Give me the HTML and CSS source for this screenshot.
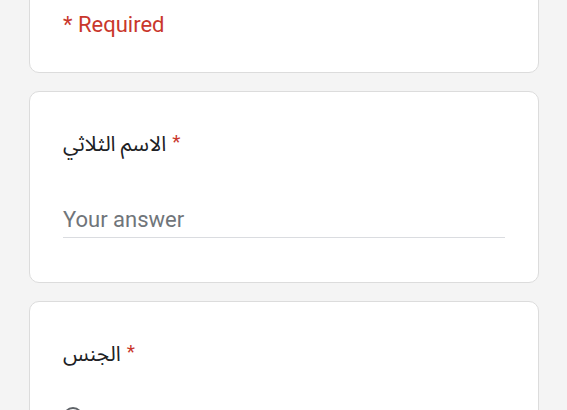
FILE: index.html
```html
<!DOCTYPE html>
<html lang="en">
<head>
<meta charset="utf-8">
<link rel="stylesheet" href="styles.css">
</head>
<body>
<main class="page">
  <section class="card card-head">
    <p class="required-note">* Required</p>
  </section>
  <section class="card">
    <div class="question-title"><span class="ar">الاسم الثلاثي</span><span class="star">*</span></div>
    <div class="answer">Your answer</div>
  </section>
  <section class="card">
    <div class="question-title"><span class="ar">الجنس</span><span class="star">*</span></div>
    <div class="options">
      <div class="option"><span class="radio"></span></div>
    </div>
  </section>
</main>
</body>
</html>
```
FILE: styles.css
```css
html, body {
  margin: 0;
  padding: 0;
  background: #f4f4f4;
  overflow: hidden;
}
body {
  font-family: Roboto, "Noto Sans Arabic", "Noto Sans", "DejaVu Sans", sans-serif;
  color: #202124;
}
.page {
  width: 510px;
  margin: -30px 0 0 29px;
  display: flex;
  flex-direction: column;
  gap: 18px;
}
.card {
  background: #fff;
  border: 1px solid #dcdcdc;
  border-radius: 10px;
  padding: 38px 33px 44px;
}
.card-head {
  padding-top: 39px;
  padding-bottom: 32px;
}
.required-note {
  margin: 0;
  font-size: 22px;
  line-height: 30px;
  color: #c9372c;
}
.question-title {
  font-size: 22px;
  line-height: 30px;
  height: 30px;
  color: #202124;
}
.ar {
  font-size: 21px;
  position: relative;
  top: -1px;
}
.star {
  color: #c9372c;
  font-size: 19px;
  position: relative;
  top: -4px;
  margin-left: 6px;
}
.answer {
  margin-top: 45px;
  font-size: 22px;
  line-height: 30px;
  color: #70757a;
  padding-bottom: 2px;
  border-bottom: 1px solid #dadce0;
}
.options {
  margin-top: 37px;
}
.option {
  display: flex;
  gap: 20px;
  height: 40px;
  align-items: flex-start;
}
.radio {
  width: 16px;
  height: 16px;
  border: 2px solid #5f6368;
  border-radius: 50%;
}
```
